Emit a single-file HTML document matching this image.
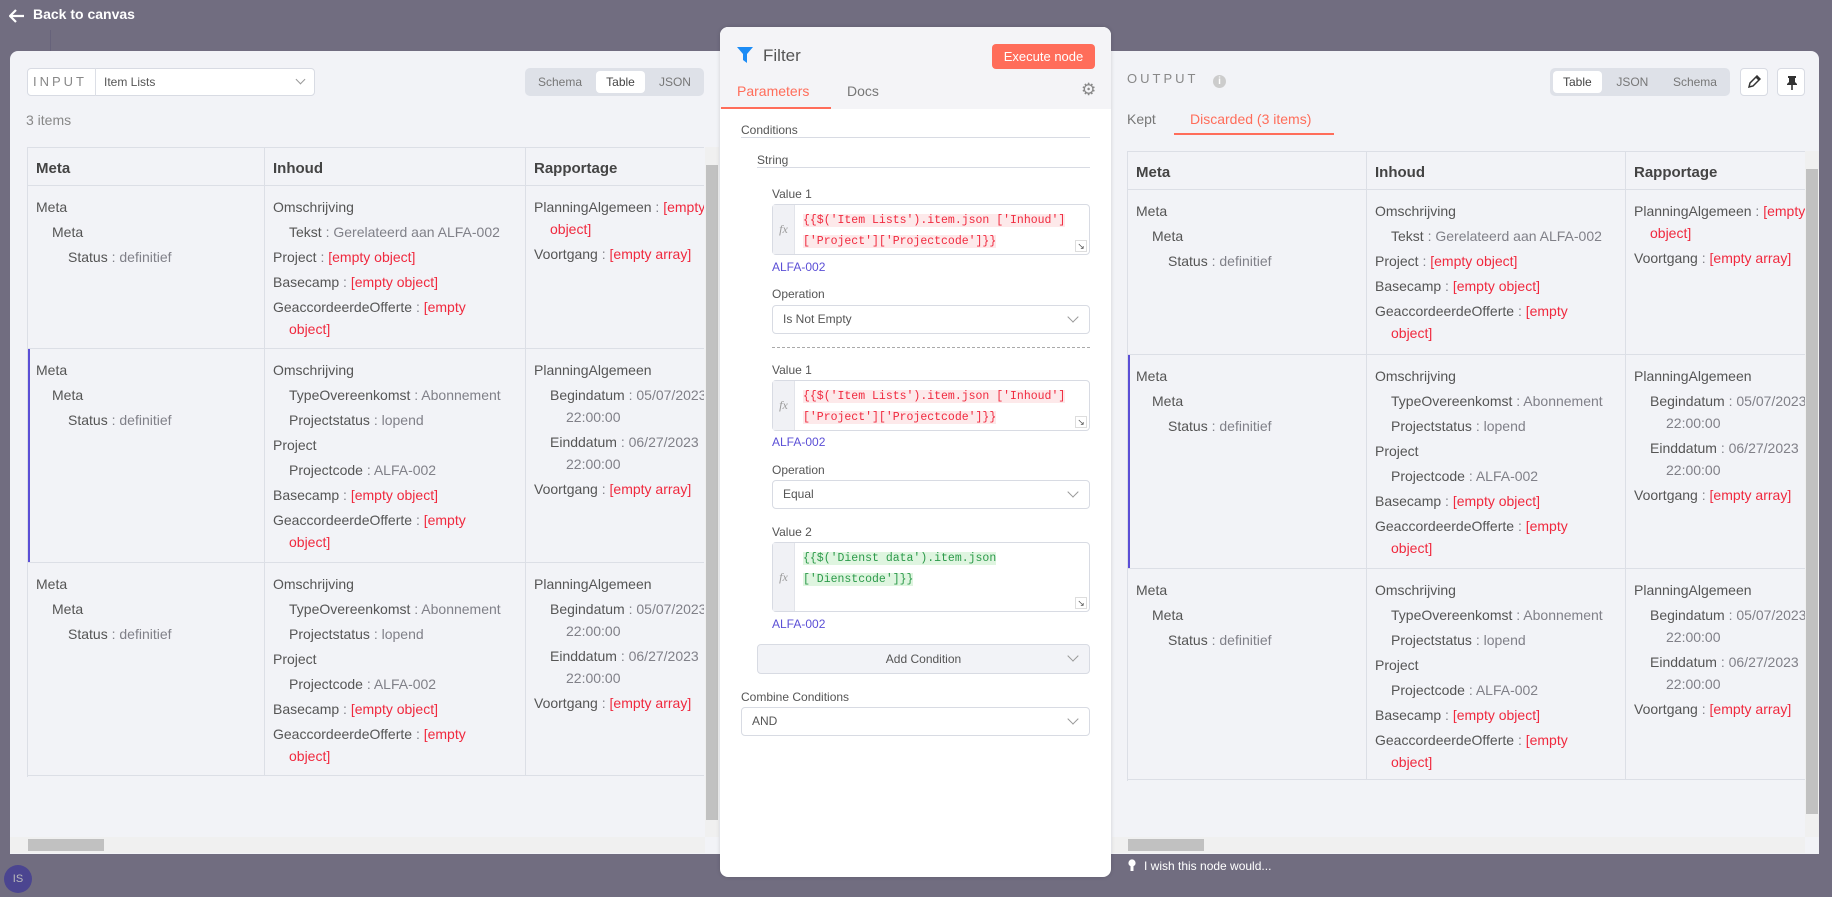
<!DOCTYPE html>
<html><head><meta charset="utf-8"><style>
*{box-sizing:border-box;margin:0;padding:0}
body{width:1832px;height:897px;overflow:hidden;background:#716d80;font-family:"Liberation Sans",sans-serif;position:relative;color:#555}
.abs{position:absolute}
.panel{position:absolute;left:10px;top:51px;width:1809px;height:803px;background:#f2f3f7;border-radius:8px 8px 0 0}
.seg{position:absolute;background:#dee1e8;border-radius:5px;display:flex;padding:3px;font-size:12px;color:#777;justify-content:space-between}
.seg div{padding:0 10px;line-height:22px;border-radius:4px}
.seg .on{background:#fff;color:#444}
.tbl{position:absolute;overflow:hidden;border-top:1px solid #dcdfe6}
.hd{position:absolute;top:0;height:38px;border-bottom:1px solid #dcdfe6;border-right:1px solid #dcdfe6;font-weight:bold;font-size:15px;color:#444;padding:12px 0 0 8px}
.c{position:absolute;border-bottom:1px solid #dcdfe6;border-right:1px solid #dcdfe6;padding:10px 8px 0 8px;font-size:14px}
.l{line-height:22px;margin-bottom:3px;color:#555}
.i1{padding-left:16px}.i2{padding-left:32px}
.w{padding-left:16px}
.v{color:#808088}
.r{color:#f0293e}
.sel2{box-shadow:inset 2px 0 0 #5b4fd6}
.vs{position:absolute;width:14px;background:#f0f0f0}
.hs{position:absolute;height:16px;background:#f0f0f0}
.lab{font-size:12px;color:#555;position:absolute}
.box{position:absolute;border:1px solid #d8dbe3;border-radius:4px;background:#fff}
.fx{position:absolute;left:0;top:0;bottom:0;width:22px;background:#f0f1f5;border-right:1px solid #e2e4ea;font-family:"Liberation Serif",serif;font-style:italic;color:#999;font-size:12px;display:flex;align-items:center;justify-content:center}
.code{position:absolute;left:30px;top:5px;font-family:"Liberation Mono",monospace;font-size:11.5px;line-height:21px;color:#f0293e}
.code span{background:#fde9ea}
.code.g{color:#2c9a4a}.code.g span{background:#dff5e0}
.alfa{position:absolute;font-size:12px;color:#5b4fd6}
.sel{position:absolute;border:1px solid #d8dbe3;border-radius:4px;background:#fff;font-size:12px;color:#555;padding-left:10px;line-height:27px}
.chev{position:absolute;right:12px;top:7px;width:8px;height:8px;border-right:1px solid #999;border-bottom:1px solid #999;transform:rotate(45deg)}
.rs{position:absolute;right:2px;bottom:2px;width:12px;height:12px;border:1px solid #ddd;font-size:9px;line-height:10px;text-align:center;color:#555}
</style></head><body>
<svg class="abs" style="left:9px;top:9px" width="16" height="14" viewBox="0 0 16 14"><path d="M7 1L1 7l6 6M1 7h14" stroke="#fff" stroke-width="2.2" fill="none"/></svg>
<div class="abs" style="left:33px;top:6px;color:#fff;font-size:14px;font-weight:bold">Back to canvas</div>
<div class="abs" style="left:50px;top:30px;width:1px;height:21px;background:#66627a"></div>

<div class="panel"></div>

<!-- INPUT -->
<div class="box" style="left:27px;top:68px;width:288px;height:28px;border-radius:4px"></div>
<div class="abs" style="left:33px;top:74px;font-size:13px;letter-spacing:3px;color:#888">INPUT</div>
<div class="abs" style="left:95px;top:68px;width:1px;height:28px;background:#dcdfe6"></div>
<div class="abs" style="left:104px;top:75px;font-size:12px;color:#555">Item Lists</div>
<div class="chev" style="left:297px;top:76px;right:auto;width:7px;height:7px"></div>
<div class="seg" style="left:525px;top:68px;width:179px;height:28px"><div>Schema</div><div class="on">Table</div><div>JSON</div></div>
<div class="abs" style="left:26px;top:112px;font-size:14px;color:#888">3 items</div>

<div class="tbl" style="left:27px;top:147px;width:677px;height:630px;border-left:1px solid #dcdfe6">
 <div class="hd" style="left:0;width:237px">Meta</div>
 <div class="hd" style="left:237px;width:261px">Inhoud</div>
 <div class="hd" style="left:498px;width:260px">Rapportage</div>
 <div class="c" style="left:0;top:38px;width:237px;height:163px"><div class="l">Meta</div><div class="l i1">Meta</div><div class="l i2">Status <span class="v">: definitief</span></div></div>
 <div class="c" style="left:237px;top:38px;width:261px;height:163px"><div class="l">Omschrijving</div><div class="l i1">Tekst <span class="v">: Gerelateerd aan ALFA-002</span></div><div class="l">Project <span class="v">:</span> <span class="r">[empty object]</span></div><div class="l">Basecamp <span class="v">:</span> <span class="r">[empty object]</span></div><div class="l">GeaccordeerdeOfferte <span class="v">:</span> <span class="r">[empty</span><br><span class="r w">object]</span></div></div>
 <div class="c" style="left:498px;top:38px;width:260px;height:163px;white-space:nowrap"><div class="l">PlanningAlgemeen <span class="v">:</span> <span class="r">[empty</span><br><span class="r w">object]</span></div><div class="l">Voortgang <span class="v">:</span> <span class="r">[empty array]</span></div></div>
 <div class="c sel2" style="left:0;top:201px;width:237px;height:214px"><div class="l">Meta</div><div class="l i1">Meta</div><div class="l i2">Status <span class="v">: definitief</span></div></div>
 <div class="c" style="left:237px;top:201px;width:261px;height:214px;white-space:nowrap"><div class="l">Omschrijving</div><div class="l i1">TypeOvereenkomst <span class="v">: Abonnement</span></div><div class="l i1">Projectstatus <span class="v">: lopend</span></div><div class="l">Project</div><div class="l i1">Projectcode <span class="v">: ALFA-002</span></div><div class="l">Basecamp <span class="v">:</span> <span class="r">[empty object]</span></div><div class="l">GeaccordeerdeOfferte <span class="v">:</span> <span class="r">[empty</span><br><span class="r w">object]</span></div></div>
 <div class="c" style="left:498px;top:201px;width:260px;height:214px;white-space:nowrap"><div class="l">PlanningAlgemeen</div><div class="l i1">Begindatum <span class="v">: 05/07/2023</span><br><span class="v w">22:00:00</span></div><div class="l i1">Einddatum <span class="v">: 06/27/2023</span><br><span class="v w">22:00:00</span></div><div class="l">Voortgang <span class="v">:</span> <span class="r">[empty array]</span></div></div>
 <div class="c" style="left:0;top:415px;width:237px;height:213px"><div class="l">Meta</div><div class="l i1">Meta</div><div class="l i2">Status <span class="v">: definitief</span></div></div>
 <div class="c" style="left:237px;top:415px;width:261px;height:213px;white-space:nowrap"><div class="l">Omschrijving</div><div class="l i1">TypeOvereenkomst <span class="v">: Abonnement</span></div><div class="l i1">Projectstatus <span class="v">: lopend</span></div><div class="l">Project</div><div class="l i1">Projectcode <span class="v">: ALFA-002</span></div><div class="l">Basecamp <span class="v">:</span> <span class="r">[empty object]</span></div><div class="l">GeaccordeerdeOfferte <span class="v">:</span> <span class="r">[empty</span><br><span class="r w">object]</span></div></div>
 <div class="c" style="left:498px;top:415px;width:260px;height:213px;white-space:nowrap"><div class="l">PlanningAlgemeen</div><div class="l i1">Begindatum <span class="v">: 05/07/2023</span><br><span class="v w">22:00:00</span></div><div class="l i1">Einddatum <span class="v">: 06/27/2023</span><br><span class="v w">22:00:00</span></div><div class="l">Voortgang <span class="v">:</span> <span class="r">[empty array]</span></div></div>
</div>
<div class="vs" style="left:705px;top:147px;height:690px"><div style="position:absolute;left:1px;right:1px;top:18px;height:655px;background:#c1c1c1"></div></div>
<div class="hs" style="left:10px;top:837px;width:695px"><div style="position:absolute;left:18px;top:2px;width:76px;height:12px;background:#c1c1c1"></div></div>

<!-- OUTPUT -->
<div class="abs" style="left:1127px;top:71px;font-size:13px;letter-spacing:3px;color:#888">OUTPUT</div>
<div class="abs" style="left:1213px;top:75px;width:13px;height:13px;border-radius:50%;background:#ccc;color:#fff;font-size:10px;text-align:center;line-height:13px;font-weight:bold">i</div>
<div class="seg" style="left:1550px;top:68px;width:180px;height:28px"><div class="on">Table</div><div>JSON</div><div>Schema</div></div>
<div class="box" style="left:1740px;top:68px;width:28px;height:28px"><svg style="position:absolute;left:6px;top:6px" width="14" height="14" viewBox="0 0 14 14"><path d="M2 12l1-4 7-7 3 3-7 7z M9 2l3 3" stroke="#333" stroke-width="1.5" fill="none"/></svg></div>
<div class="box" style="left:1777px;top:68px;width:28px;height:28px"><svg style="position:absolute;left:8px;top:6px" width="12" height="16" viewBox="0 0 12 16"><path d="M2 1h8v2H9v4l2 2v1H1V9l2-2V3H2z" fill="#333"/><path d="M6 10v5" stroke="#333" stroke-width="1.6"/></svg></div>
<div class="abs" style="left:1127px;top:111px;font-size:14px;color:#777">Kept</div>
<div class="abs" style="left:1190px;top:111px;font-size:14px;color:#ff6d5a">Discarded (3 items)</div>
<div class="abs" style="left:1174px;top:133px;width:160px;height:2px;background:#ff6d5a"></div>

<div class="tbl" style="left:1127px;top:151px;width:678px;height:630px;border-left:1px solid #dcdfe6">
 <div class="hd" style="left:0;width:239px">Meta</div>
 <div class="hd" style="left:239px;width:259px">Inhoud</div>
 <div class="hd" style="left:498px;width:260px">Rapportage</div>
 <div class="c" style="left:0;top:38px;width:239px;height:165px"><div class="l">Meta</div><div class="l i1">Meta</div><div class="l i2">Status <span class="v">: definitief</span></div></div>
 <div class="c" style="left:239px;top:38px;width:259px;height:165px"><div class="l">Omschrijving</div><div class="l i1">Tekst <span class="v">: Gerelateerd aan ALFA-002</span></div><div class="l">Project <span class="v">:</span> <span class="r">[empty object]</span></div><div class="l">Basecamp <span class="v">:</span> <span class="r">[empty object]</span></div><div class="l">GeaccordeerdeOfferte <span class="v">:</span> <span class="r">[empty</span><br><span class="r w">object]</span></div></div>
 <div class="c" style="left:498px;top:38px;width:260px;height:165px;white-space:nowrap"><div class="l">PlanningAlgemeen <span class="v">:</span> <span class="r">[empty</span><br><span class="r w">object]</span></div><div class="l">Voortgang <span class="v">:</span> <span class="r">[empty array]</span></div></div>
 <div class="c sel2" style="left:0;top:203px;width:239px;height:214px"><div class="l">Meta</div><div class="l i1">Meta</div><div class="l i2">Status <span class="v">: definitief</span></div></div>
 <div class="c" style="left:239px;top:203px;width:259px;height:214px;white-space:nowrap"><div class="l">Omschrijving</div><div class="l i1">TypeOvereenkomst <span class="v">: Abonnement</span></div><div class="l i1">Projectstatus <span class="v">: lopend</span></div><div class="l">Project</div><div class="l i1">Projectcode <span class="v">: ALFA-002</span></div><div class="l">Basecamp <span class="v">:</span> <span class="r">[empty object]</span></div><div class="l">GeaccordeerdeOfferte <span class="v">:</span> <span class="r">[empty</span><br><span class="r w">object]</span></div></div>
 <div class="c" style="left:498px;top:203px;width:260px;height:214px;white-space:nowrap"><div class="l">PlanningAlgemeen</div><div class="l i1">Begindatum <span class="v">: 05/07/2023</span><br><span class="v w">22:00:00</span></div><div class="l i1">Einddatum <span class="v">: 06/27/2023</span><br><span class="v w">22:00:00</span></div><div class="l">Voortgang <span class="v">:</span> <span class="r">[empty array]</span></div></div>
 <div class="c" style="left:0;top:417px;width:239px;height:211px"><div class="l">Meta</div><div class="l i1">Meta</div><div class="l i2">Status <span class="v">: definitief</span></div></div>
 <div class="c" style="left:239px;top:417px;width:259px;height:211px;white-space:nowrap"><div class="l">Omschrijving</div><div class="l i1">TypeOvereenkomst <span class="v">: Abonnement</span></div><div class="l i1">Projectstatus <span class="v">: lopend</span></div><div class="l">Project</div><div class="l i1">Projectcode <span class="v">: ALFA-002</span></div><div class="l">Basecamp <span class="v">:</span> <span class="r">[empty object]</span></div><div class="l">GeaccordeerdeOfferte <span class="v">:</span> <span class="r">[empty</span><br><span class="r w">object]</span></div></div>
 <div class="c" style="left:498px;top:417px;width:260px;height:211px;white-space:nowrap"><div class="l">PlanningAlgemeen</div><div class="l i1">Begindatum <span class="v">: 05/07/2023</span><br><span class="v w">22:00:00</span></div><div class="l i1">Einddatum <span class="v">: 06/27/2023</span><br><span class="v w">22:00:00</span></div><div class="l">Voortgang <span class="v">:</span> <span class="r">[empty array]</span></div></div>
</div>
<div class="vs" style="left:1805px;top:151px;height:686px"><div style="position:absolute;left:1px;right:1px;top:18px;height:645px;background:#c1c1c1"></div></div>
<div class="hs" style="left:1112px;top:837px;width:693px"><div style="position:absolute;left:16px;top:2px;width:76px;height:12px;background:#c1c1c1"></div></div>

<svg class="abs" style="left:1128px;top:859px" width="8" height="14" viewBox="0 0 8 14"><circle cx="4" cy="4" r="3.6" fill="#fff"/><rect x="2.5" y="7" width="3" height="5" fill="#fff"/></svg>
<div class="abs" style="left:1144px;top:859px;font-size:12px;color:#fff">I wish this node would...</div>
<div class="abs" style="left:4px;top:865px;width:28px;height:28px;border-radius:50%;background:#4b4590;color:#bbb;font-size:11px;text-align:center;line-height:28px">IS</div>

<!-- CENTER -->
<div class="abs" style="left:720px;top:27px;width:391px;height:850px;background:#fff;border-radius:8px;box-shadow:0 0 4px rgba(0,0,0,.15);overflow:hidden">
 <div class="abs" style="left:0;top:0;width:391px;height:82px;background:#f4f4f7"></div>
 <svg class="abs" style="left:16px;top:19px" width="18" height="18" viewBox="0 0 18 18"><path d="M1 1h16l-6 7v9l-4-3V8z" fill="#1c8cf5"/></svg>
 <div class="abs" style="left:43px;top:19px;font-size:17px;color:#555">Filter</div>
 <div class="abs" style="left:272px;top:17px;width:103px;height:25px;background:#ff6d5a;border-radius:4px;color:#fff;font-size:13px;text-align:center;line-height:25px">Execute node</div>
 <div class="abs" style="left:17px;top:56px;font-size:14px;color:#ff6d5a">Parameters</div>
 <div class="abs" style="left:1px;top:80px;width:110px;height:2px;background:#ff6d5a"></div>
 <div class="abs" style="left:127px;top:56px;font-size:14px;color:#777">Docs</div>
 <div class="abs" style="left:361px;top:53px;font-size:17px;color:#888">&#9881;</div>

 <div class="lab" style="left:21px;top:96px">Conditions</div>
 <div class="abs" style="left:21px;top:110px;width:349px;height:1px;background:#d8dbe3"></div>
 <div class="lab" style="left:37px;top:126px">String</div>
 <div class="abs" style="left:37px;top:140px;width:333px;height:1px;background:#d8dbe3"></div>

 <div class="lab" style="left:52px;top:160px">Value 1</div>
 <div class="box" style="left:52px;top:177px;width:318px;height:51px"><div class="fx">fx</div><div class="code"><span>{{$('Item Lists').item.json ['Inhoud']</span><br><span>['Project']['Projectcode']}}</span></div><div class="rs">&#8600;</div></div>
 <div class="alfa" style="left:52px;top:233px">ALFA-002</div>
 <div class="lab" style="left:52px;top:260px">Operation</div>
 <div class="sel" style="left:52px;top:278px;width:318px;height:29px">Is Not Empty<div class="chev"></div></div>
 <div class="abs" style="left:52px;top:320px;width:318px;border-top:1px dashed #aaa"></div>

 <div class="lab" style="left:52px;top:336px">Value 1</div>
 <div class="box" style="left:52px;top:353px;width:318px;height:51px"><div class="fx">fx</div><div class="code"><span>{{$('Item Lists').item.json ['Inhoud']</span><br><span>['Project']['Projectcode']}}</span></div><div class="rs">&#8600;</div></div>
 <div class="alfa" style="left:52px;top:408px">ALFA-002</div>
 <div class="lab" style="left:52px;top:436px">Operation</div>
 <div class="sel" style="left:52px;top:453px;width:318px;height:29px">Equal<div class="chev"></div></div>
 <div class="lab" style="left:52px;top:498px">Value 2</div>
 <div class="box" style="left:52px;top:515px;width:318px;height:70px"><div class="fx">fx</div><div class="code g"><span>{{$('Dienst data').item.json </span><br><span>['Dienstcode']}}</span></div><div class="rs">&#8600;</div></div>
 <div class="alfa" style="left:52px;top:590px">ALFA-002</div>
 <div class="abs" style="left:37px;top:617px;width:333px;height:30px;background:#f2f3f7;border:1px solid #d8dbe3;border-radius:4px;font-size:12px;color:#555;text-align:center;line-height:28px">Add Condition<div class="chev"></div></div>
 <div class="lab" style="left:21px;top:663px">Combine Conditions</div>
 <div class="sel" style="left:21px;top:680px;width:349px;height:29px">AND<div class="chev"></div></div>
</div>
</body></html>
